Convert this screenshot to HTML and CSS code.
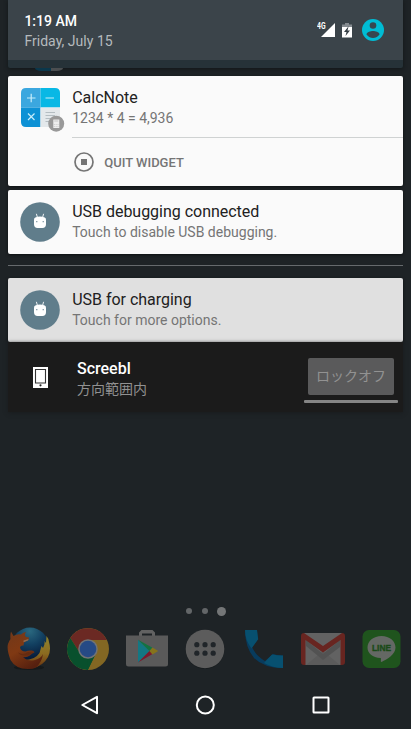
FILE: index.html
```html
<!DOCTYPE html>
<html lang="en">
<head>
<meta charset="utf-8">
<title>Notifications</title>
<link rel="stylesheet" href="styles.css">
</head>
<body>
<svg class="defs" aria-hidden="true">
  <symbol id="marshmallow" viewBox="0 0 40 40">
    <circle cx="20" cy="20" r="19.8" fill="#607d8b"/>
    <path d="M16.500 12.200l.7 2.500M23.500 12.200l-.7 2.500" stroke="#fff" stroke-width=".9" stroke-linecap="round"/>
    <path d="M15.300 15.500Q14 15.800 14 18v4.300q0 3.600 3.600 3.600h4.800q3.600 0 3.600-3.600V18q0-2.200-1.300-2.500Q20 13.700 15.300 15.500z" fill="#fff"/>
    <circle cx="16.800" cy="19.700" r=".65" fill="#607d8b"/><circle cx="23.200" cy="19.700" r=".65" fill="#607d8b"/>
  </symbol>
</svg>
<main class="screen">
  <header class="header">
    <div class="clock">
      <div class="time">1:19 AM</div>
      <div class="date">Friday, July 15</div>
    </div>
    <div class="status">
      <svg class="signal" width="18" height="16" viewBox="0 0 18 16"><path d="M4 15L18 1v14z" fill="#fff"/><text x="0" y="7" class="net" textLength="8.500" lengthAdjust="spacingAndGlyphs">4G</text></svg>
      <svg class="battery" width="10" height="15" viewBox="0 0 10 15"><path d="M3 0h4v1.500h3V4H0V1.500h3z" fill="#858b90"/><path d="M0 4h10v10.500H0z" fill="#fff"/><path d="M6.600 3.300L2 9h2.500l-1 4L8 7.500H5.500z" fill="#343d43"/></svg>
      <svg class="user" width="22" height="22" viewBox="0 0 22 22"><circle cx="11" cy="11" r="11" fill="#00bcd4"/><circle cx="11" cy="6.500" r="3.300" fill="#37474f"/><path d="M4.400 15.200C5 12.800 8.500 11.900 11 11.900s6 .9 6.600 3.300C16.200 17.600 13.800 19 11 19s-5.200-1.400-6.600-3.800z" fill="#37474f"/></svg>
    </div>
  </header>
  <div class="peek"><span class="peek-blue"></span><span class="peek-gray"></span></div>

  <section class="card calc">
    <svg class="app-icon" width="44" height="44" viewBox="0 0 44 44">
      <path d="M5 0h14.500v19.500H0V5Q0 0 5 0z" fill="#3ba7df"/>
      <path d="M19.500 0H34q5 0 5 5v14.500H19.500z" fill="#08b8e5"/>
      <path d="M0 19.500h19.500V39H5q-5 0-5-5z" fill="#0d91d5"/>
      <path d="M19.500 19.500H39V34q0 5-5 5H19.500z" fill="#e3e8eb"/>
      <path d="M6 10h8.500M10.200 5.800v8.500M24.500 10H33M7 25.500l6.500 6.500m0-6.500L7 32" stroke="#c8edfa" stroke-width="1.200"/>
      <path d="M24.500 24.500H34M24.500 27.500H34M24.500 30.500h7M24.500 33.500h5" stroke="#b4bdc2" stroke-width="1"/>
      <circle cx="35.200" cy="35.700" r="8" fill="#999"/>
      <rect x="32.300" y="31.500" width="6" height="8.500" fill="#eee"/>
      <path d="M33.300 33h4M33.300 36v.8M35.200 36v.8M37 36v.8M33.300 38v.8M35.200 38v.8M37 38v.8" stroke="#bbb" stroke-width=".8"/>
    </svg>
    <div class="content">
      <div class="title">CalcNote</div>
      <div class="detail">1234 * 4 = 4,936</div>
      <div class="action">
        <svg width="20" height="20" viewBox="0 0 20 20"><circle cx="10" cy="10" r="9" fill="none" stroke="#757575" stroke-width="1.700"/><path d="M7 7h6v6H7z" fill="#757575"/></svg>
        <span>QUIT WIDGET</span>
      </div>
    </div>
  </section>

  <section class="card usb">
    <svg class="app-icon" width="40" height="40"><use href="#marshmallow"/></svg>
    <div class="content">
      <div class="title">USB debugging connected</div>
      <div class="detail">Touch to disable USB debugging.</div>
    </div>
  </section>

  <div class="separator"></div>

  <section class="card usb low">
    <svg class="app-icon" width="40" height="40"><use href="#marshmallow"/></svg>
    <div class="content">
      <div class="title">USB for charging</div>
      <div class="detail">Touch for more options.</div>
    </div>
  </section>

  <section class="screebl">
    <svg class="device" width="15" height="21" viewBox="0 0 15 21"><path d="M0 0h15v21H0z" fill="#fff"/><path d="M2.500 2.500h10V16h-10z" fill="#fff" stroke="#333" stroke-width="1.100"/><circle cx="7.500" cy="18.300" r="1.100" fill="#222"/></svg>
    <div class="screebl-text">
      <div class="screebl-title">Screebl</div>
      <div class="screebl-detail" lang="ja">方向範囲内</div>
    </div>
    <div class="toggle">
      <div class="toggle-label" lang="ja">ロックオフ</div>
      <div class="toggle-bar"></div>
    </div>
  </section>

  <div class="pages"><i></i><i></i><i class="current"></i></div>

  <nav class="dock">
    <svg width="44" height="44" viewBox="0 0 44 44">
      <defs>
        <radialGradient id="globe" cx=".5" cy=".1" r=".75"><stop offset="0" stop-color="#2a687f"/><stop offset=".5" stop-color="#123f60"/><stop offset="1" stop-color="#071a38"/></radialGradient>
        <linearGradient id="fox" x1="0" y1="0" x2=".6" y2="1"><stop offset="0" stop-color="#70381a"/><stop offset=".5" stop-color="#803913"/><stop offset="1" stop-color="#56200f"/></linearGradient>
        <linearGradient id="flame" x1="0" y1="0" x2="0" y2="1"><stop offset="0" stop-color="#8f852f"/><stop offset=".55" stop-color="#8b6b20"/><stop offset="1" stop-color="#68300f"/></linearGradient>
      </defs>
      <ellipse cx="22" cy="40.500" rx="15" ry="2.500" fill="#15191b"/>
      <circle cx="23" cy="18.800" r="18.300" fill="url(#globe)"/>
      <path d="M39.500 9Q42 12 42 15q2.500 8-1 15-5 9-15 11l-9-8q11 0 15.500-7l2-7 1.500 2q2-3 1.500-7l1.500 2z" fill="url(#flame)"/>
      <path d="M4 4.500l2.500 4.500q4-2.500 7.500-1.500 2-2.500 5-2.500-2 3 0 5l3 .5-.5 2.500-4.500 2.500-.5 3q-3-.5-3.500 2 1 4 5.500 4 3-1.500 6.500-1 2.500.5 2.500 2-3 1-4.500 3-3.500 2.500-7 1.500 5 5 12 3 6-1.500 8-6-1 8-7 13.500-3 1.500-7 1.500-13 .5-18.500-9Q-.5 22.500 1 17q1-3 2.500-5Q3 8 4 4.500z" fill="url(#fox)"/>
      <path d="M16.500 13.500l5-1.500-.5 1.500-4.500 1.800z" fill="#8b6d54"/>
      <path d="M11 25.500q5 3 10-.5l5 .8q-5 3.200-9 2.700-4 0-6-3z" fill="#642b11"/>
    </svg>
    <svg width="44" height="44" viewBox="0 0 44 44">
      <circle cx="22" cy="22" r="21" fill="#836723"/>
      <path d="M22 13H40.900A21 21 0 0 0 4.300 10.900L14 26z" fill="#6b2923"/>
      <path d="M4.300 10.900A21 21 0 0 0 21.800 43L29.800 26.500 22 31 14.200 26.500z" fill="#08502d"/>
      <path d="M22 31l7.800-4.500L21.800 43h-1z" fill="#08502d"/>
      <circle cx="22" cy="22" r="9.800" fill="#717375"/><circle cx="22" cy="22" r="8.300" fill="#264a85"/>
    </svg>
    <svg width="44" height="44" viewBox="0 0 44 44">
      <path d="M14 9V5.500l2.500-2.500h11L30 5.500V9h-3V6.500H17V9z" fill="#626262"/>
      <path d="M1 8.500h42V37q0 2.500-2.500 2.500h-37Q1 39.500 1 37z" fill="#5a5a5a"/>
      <path d="M13 12.800l11.500 11.200L13 35.500z" fill="#137783"/>
      <path d="M13 12.800l14.500 8L24.500 24z" fill="#137342"/>
      <path d="M13 35.500L24.500 24l3 3z" fill="#7b1a2d"/>
      <path d="M24.500 24l3-3.500 5.700 3.500-5.700 3.500z" fill="#86731b"/>
    </svg>
    <svg width="44" height="44" viewBox="0 0 44 44">
      <circle cx="22" cy="22.600" r="19.300" fill="#171b1d"/><circle cx="22" cy="22" r="19.300" fill="#5c5c5c"/>
      <g fill="#202529"><circle cx="13.800" cy="17.700" r="2.600"/><circle cx="22" cy="17.700" r="2.600"/><circle cx="30.200" cy="17.700" r="2.600"/><circle cx="13.800" cy="26.200" r="2.600"/><circle cx="22" cy="26.200" r="2.600"/><circle cx="30.200" cy="26.200" r="2.600"/></g>
    </svg>
    <svg width="44" height="44" viewBox="0 0 44 44">
      <path d="M3 3h12q0 5 1 9l-6 8q4 9 13 14l8-7q5 1.500 10 1.500V41Q22 41 12 31 3 20 3 3z" fill="#083b5d"/>
      <path d="M3 3h12l1.200 9.300L9.500 21.500Q3 13 3 3zM41 28.500V41q-10 0-19-5l8-8.500q6 1.200 11 1z" fill="#075070"/>
    </svg>
    <svg width="44" height="44" viewBox="0 0 44 44">
      <path d="M3 6h38v32H3z" fill="#626262"/><path d="M5 38l17-14 17 14z" fill="#5b5b5b"/>
      <path d="M5 13l17 14 17-14v7L22 33 5 19z" fill="#525252"/>
      <path d="M0 9q0-3 3-3l19 13L41 6q3 0 3 3v26q0 3-3 3h-1.500V13L22 25.500 4.500 13v25H3q-3 0-3-3z" fill="#682520"/>
    </svg>
    <svg width="44" height="44" viewBox="0 0 44 44">
      <rect x="2.500" y="3" width="38" height="38" rx="6.500" fill="#1f541d"/>
      <path d="M21.500 9c8 0 14 5.100 14 11.500 0 7-8 11.500-14 14.500-1.500 0 .2-3.500-1-4C12.500 30.500 7.500 26.500 7.500 20.500 7.500 14.100 13.500 9 21.500 9z" fill="#646864"/>
      <text x="12" y="23.800" class="line-text" textLength="19" lengthAdjust="spacingAndGlyphs">LINE</text>
    </svg>
  </nav>

  <nav class="navbar">
    <svg width="24" height="24" viewBox="0 0 24 24"><path d="M19 3.800v16.400L4.300 12z"/></svg>
    <svg width="24" height="24" viewBox="0 0 24 24"><circle cx="12.300" cy="12" r="8.500"/></svg>
    <svg width="24" height="24" viewBox="0 0 24 24"><rect x="4.500" y="4.500" width="15" height="15" rx=".5"/></svg>
  </nav>
</main>
</body>
</html>
```
FILE: styles.css
```css
* { box-sizing: border-box; }
body {
  margin: 0;
  background: #1e2326;
  font-family: Roboto, "Noto Sans CJK JP", sans-serif;
}
.defs { position: absolute; width: 0; height: 0; }
.screen {
  width: 411px;
  height: 729px;
  padding: 0 8px;
  display: flex;
  flex-direction: column;
  overflow: hidden;
}
.header {
  height: 68px;
  flex: none;
  display: flex;
  justify-content: space-between;
  padding: 11px 19px 0 16.400px;
  background: #3b444a;
  border-bottom: 8px solid #263238;
  border-radius: 0 0 2px 2px;
  box-shadow: 0 1px 4px #111618;
}
.time { font-size: 14px; line-height: 20px; font-weight: 500; color: #fff; }
.date { font-size: 14px; line-height: 21px; color: #b5babd; letter-spacing: .03px; }
.status { display: flex; align-items: center; height: 38px; }
.net { font: 700 8.500px "Roboto", sans-serif; fill: #fff; }
.battery { margin-left: 7px; }
.user { margin-left: 10px; }
.peek { display: flex; height: 3px; flex: none; margin: 0 0 5px 27px; }
.peek-blue { width: 16px; background: #0b374b; border-bottom-left-radius: 6px 3px; }
.peek-gray { width: 12px; background: #4b4e50; border-bottom-right-radius: 6px 3px; }
.card {
  flex: none;
  display: flex;
  background: #fafafa;
  border-radius: 2px;
  box-shadow: 0 1px 3px #0c1012;
  margin-bottom: 4px;
  padding-left: 12.200px;
}
.calc { height: 110px; padding-left: 13px; }
.usb { height: 64px; margin-bottom: 0; }
.low { background: #e0e0e0; }
.app-icon { flex: none; margin-top: 12px; }
.content { flex: 1; margin-left: 12px; padding-top: 11px; }
.calc .content { margin-left: 7.200px; }
.title { font-size: 16px; line-height: 21px; color: #212121; letter-spacing: -.02px; }
.detail { font-size: 14px; line-height: 20px; color: #757575; }
.action {
  display: flex;
  align-items: center;
  height: 49px;
  margin-top: 9px;
  padding-left: 2px;
  gap: 10px;
  border-top: 1px solid #cfd2d2;
  font-size: 13px;
  font-weight: 500;
  color: #757575;
}
.separator { flex: none; height: 1px; margin: 11px 0 12px; background: #666a6d; }
.screebl {
  flex: none;
  display: flex;
  height: 70px;
  padding-left: 25px;
  background: #1b1b1b;
  box-shadow: 0 1px 4px #191c1e;
}
.device { margin-top: 25px; }
.screebl-text { flex: 1; margin-left: 29px; padding-top: 16px; }
.screebl-title { font-size: 16px; line-height: 21px; font-weight: 500; color: #fff; }
.screebl-detail { font-size: 14px; line-height: 20px; color: #919191; }
.toggle { width: 94px; margin-right: 5px; padding-top: 16px; }
.toggle-label {
  margin: 0 4px;
  height: 37px;
  border-radius: 2px;
  background: #5a5a5b;
  color: #929292;
  font-size: 14px;
  line-height: 36px;
  text-align: center;
}
.toggle-bar { height: 3px; margin-top: 5px; border-radius: 1px; background: #858585; }
.pages { flex: none; display: flex; align-items: center; gap: 10px; height: 10px; margin: 194px 0 0 178.300px; }
.pages i { width: 6px; height: 6px; border-radius: 50%; background: #636668; }
.pages .current { width: 9px; height: 9px; margin-left: -1px; background: #747677; }
.dock {
  flex: none;
  display: grid;
  grid-template-columns: repeat(7, 1fr);
  justify-items: center;
  margin: 11px -8px 0;
}
.line-text { font: 700 9px "Liberation Sans", sans-serif; fill: #1a4a18; stroke: #1a4a18; stroke-width: .4; }
.navbar {
  flex: none;
  display: grid;
  grid-template-columns: repeat(3, 1fr);
  justify-items: center;
  margin: 22px 24.500px 0;
}
.navbar svg { fill: none; stroke: #fff; stroke-width: 2; stroke-linejoin: round; }
```
